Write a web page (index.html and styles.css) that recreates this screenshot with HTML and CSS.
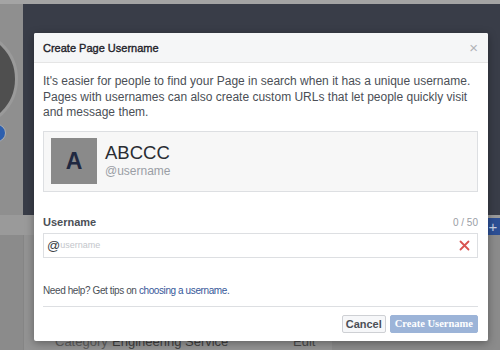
FILE: index.html
```html
<!DOCTYPE html>
<html>
<head>
<meta charset="utf-8">
<link rel="stylesheet" href="styles.css">
</head>
<body>
<div class="page">
  <div class="topstrip"></div>
  <div class="hero">
    <div class="side">
      <div class="profile"></div>
      <div class="badge"></div>
    </div>
    <div class="cover"></div>
  </div>
  <div class="band">
    <div class="plus">+</div>
  </div>
  <div class="lower">
    <div class="card">
      <div class="inforow">
        <span class="k">Category</span>
        <span class="v">Engineering Service</span>
        <span class="e">Edit</span>
      </div>
    </div>
  </div>
</div>

<div class="modal">
  <div class="mhead">
    <span class="mtitle">Create Page Username</span>
    <span class="mclose">&#215;</span>
  </div>
  <div class="mbody">
    <p class="intro">It's easier for people to find your Page in search when it has a unique username.<br>Pages with usernames can also create custom URLs that let people quickly visit<br>and message them.</p>
    <div class="preview">
      <div class="pavatar">A</div>
      <div class="pinfo">
        <div class="pname">ABCCC</div>
        <div class="puser">@username</div>
      </div>
    </div>
    <div class="labelrow">
      <span class="label">Username</span>
      <span class="count">0 / 50</span>
    </div>
    <div class="field">
      <span class="at">@</span><span class="ph">username</span>
      <svg class="clear" width="11" height="11" viewBox="0 0 11 11"><path d="M1.5 1.5 L9.5 9.5 M9.5 1.5 L1.5 9.5" stroke="#d9534f" stroke-width="1.8" stroke-linecap="round"/></svg>
    </div>
    <p class="help">Need help? Get tips on <span class="link">choosing a username.</span></p>
    <div class="mfoot">
      <button class="btn cancel">Cancel</button>
      <button class="btn create">Create Username</button>
    </div>
  </div>
</div>
</body>
</html>
```

FILE: styles.css
```css
html, body {
  margin: 0;
  padding: 0;
}
body {
  width: 500px;
  height: 350px;
  overflow: hidden;
  background: #8d8d8d;
  font-family: "Liberation Sans", Arial, sans-serif;
  position: relative;
}
.page {
  display: flex;
  flex-direction: column;
  height: 350px;
}
.topstrip {
  height: 4px;
  background: #a4a4a4;
}
.hero {
  display: flex;
  height: 211px;
}
.side {
  width: 23px;
  background: #8f8f8f;
  position: relative;
  overflow: hidden;
}
.profile {
  position: absolute;
  left: -80px;
  top: 26px;
  width: 92px;
  height: 92px;
  border-radius: 50%;
  background: #4f4f4f;
  border: 3px solid #9a9a9a;
}
.badge {
  position: absolute;
  left: -12px;
  top: 120px;
  width: 16px;
  height: 16px;
  border-radius: 50%;
  background: #2d5fae;
  border: 1px solid #b0b0b0;
}
.cover {
  flex: 1;
  background: #393d48;
}
.band {
  height: 17px;
  background: #9a9a9a;
  display: flex;
  justify-content: flex-end;
  align-items: flex-start;
  padding-top: 3px;
}
.plus {
  width: 14px;
  height: 18px;
  background: #2c4f95;
  color: #c9d3e6;
  font-size: 15px;
  line-height: 18px;
  text-align: center;
}
.lower {
  flex: 1;
  display: flex;
  padding-left: 23px;
  background: #8b8b8b;
}
.card {
  width: 308px;
  background: #939393;
  border-left: 1px solid #858585;
  display: flex;
  flex-direction: column;
  justify-content: flex-end;
}
.inforow {
  display: flex;
  font-size: 13px;
  line-height: 16px;
  height: 16px;
  padding-left: 31px;
  color: #3f3f3f;
}
.inforow .k { width: 57px; color: #5c5c5c; }
.inforow .v { width: 181px; }
.inforow .e { color: #4a4a4a; }

.modal {
  position: absolute;
  left: 34px;
  top: 33px;
  width: 454px;
  height: 308px;
  background: #fff;
  border-radius: 2px;
  box-shadow: 0 2px 8px rgba(0,0,0,0.35);
  display: flex;
  flex-direction: column;
}
.mhead {
  height: 29px;
  background: #f5f6f7;
  border-bottom: 1px solid #e5e5e5;
  border-radius: 2px 2px 0 0;
  display: flex;
  align-items: center;
  justify-content: space-between;
  padding: 0 9px 0 9px;
}
.mtitle {
  font-size: 11px;
  color: #1d2129;
  -webkit-text-stroke: 0.35px #1d2129;
}
.mclose {
  font-size: 15px;
  color: #b0b3b8;
  line-height: 1;
  margin-right: 1px;
}
.mbody {
  padding: 11px 10px 0 9px;
  display: flex;
  flex-direction: column;
}
.intro {
  margin: 0;
  font-size: 12px;
  line-height: 15.5px;
  color: #4b4f56;
  white-space: nowrap;
}
.preview {
  margin-top: 10px;
  height: 59px;
  border: 1px solid #dddfe2;
  background: #f7f7f7;
  display: flex;
  align-items: center;
  padding-left: 7px;
}
.pavatar {
  width: 46px;
  height: 46px;
  background: #8a8a8a;
  color: #202840;
  font-weight: bold;
  font-size: 23px;
  display: flex;
  align-items: center;
  justify-content: center;
}
.pinfo {
  margin-left: 8px;
  display: flex;
  flex-direction: column;
}
.pname {
  font-size: 18.5px;
  line-height: 22px;
  color: #2a2d33;
  margin-top: -1px;
}
.puser {
  font-size: 12px;
  line-height: 15px;
  color: #9a9ea5;
}
.labelrow {
  margin-top: 24px;
  display: flex;
  justify-content: space-between;
  align-items: baseline;
}
.label {
  font-size: 11px;
  font-weight: bold;
  color: #4b4f56;
}
.count {
  font-size: 10px;
  color: #9a9ea5;
}
.field {
  margin-top: 5px;
  height: 23px;
  border: 1px solid #dddfe2;
  display: flex;
  align-items: center;
  padding: 0 7px 0 3px;
}
.at {
  font-size: 13px;
  color: #3b3e44;
}
.ph {
  font-size: 9px;
  color: #c3c6cb;
}
.clear {
  margin-left: auto;
}
.help {
  margin: 26px 0 0 0;
  font-size: 10px;
  letter-spacing: -0.4px;
  line-height: 14px;
  color: #4b4f56;
}
.link {
  color: #365899;
}
.mfoot {
  margin-top: 8px;
  border-top: 1px solid #dddfe2;
  padding-top: 8px;
  display: flex;
  justify-content: flex-end;
  gap: 4px;
}
.btn {
  height: 18px;
  font-size: 11px;
  font-weight: bold;
  border-radius: 2px;
  padding: 0 3px;
  line-height: 16px;
}
.cancel {
  background: #f6f7f9;
  border: 1px solid #ced0d4;
  color: #4b4f56;
  font-family: "Liberation Sans", Arial, sans-serif;
}
.create {
  background: #9cb4d8;
  border: 1px solid #9cb4d8;
  color: #fff;
  font-family: "Liberation Serif", "Times New Roman", serif;
  font-size: 10.5px;
  padding: 0 4px;
}
```
